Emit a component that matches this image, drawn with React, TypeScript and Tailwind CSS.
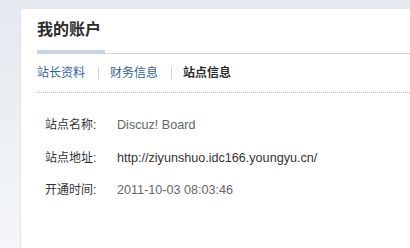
import React from "react";

export default function App() {
  const rows: { label: string; value: string; color: string }[] = [
    { label: "站点名称:", value: "Discuz! Board", color: "text-[#666666]" },
    { label: "站点地址:", value: "http://ziyunshuo.idc166.youngyu.cn/", color: "text-[#333333]" },
    { label: "开通时间:", value: "2011-10-03 08:03:46", color: "text-[#666666]" },
  ];
  return (
    <div
      className="w-[410px] h-[248px] overflow-hidden flex flex-col pt-[9px] bg-gradient-to-b from-[#e4e9ef] to-[#f4f6f9]"
      style={{ fontFamily: "'Liberation Sans', 'Noto Sans CJK SC', sans-serif" }}
    >
      <div className="flex-1 ml-[20px] bg-white border-l border-[#dfe6f0] flex flex-col">
        <div className="pl-[16px] pt-[13px] text-[16px] leading-[16px] font-bold text-[#2b2b2b]">
          我的账户
        </div>
        <div className="flex items-end mt-[12px] pl-[16px]">
          <div className="w-[68px] h-[4px] bg-[#c9d2e2]" />
          <div className="flex-1 h-px bg-[#d1d8e3]" />
        </div>
        <div className="flex items-center pl-[16px] mt-[13px] text-[12px] leading-[12px]">
          <span className="text-[#2f6498]">站长资料</span>
          <span className="w-px h-[12px] bg-[#e2ccd4] ml-[13px] mr-[11px]" />
          <span className="text-[#2f6498]">财务信息</span>
          <span className="w-px h-[12px] bg-[#e2ccd4] ml-[13px] mr-[11px]" />
          <span className="text-[#2b2b2b] font-bold">站点信息</span>
        </div>
        <div className="ml-[16px] mt-[13px] border-t border-dotted border-[#bdbdbd]" />
        <div className="flex flex-col pl-[24px] pt-[16px]">
          {rows.map((r) => (
            <div key={r.label} className="flex items-center h-[32.5px] text-[12px] leading-[14px]">
              <span className="w-[72px] text-[#333333]">{r.label}</span>
              <span className={`${r.color} text-[12.6px]`}>{r.value}</span>
            </div>
          ))}
        </div>
      </div>
    </div>
  );
}
